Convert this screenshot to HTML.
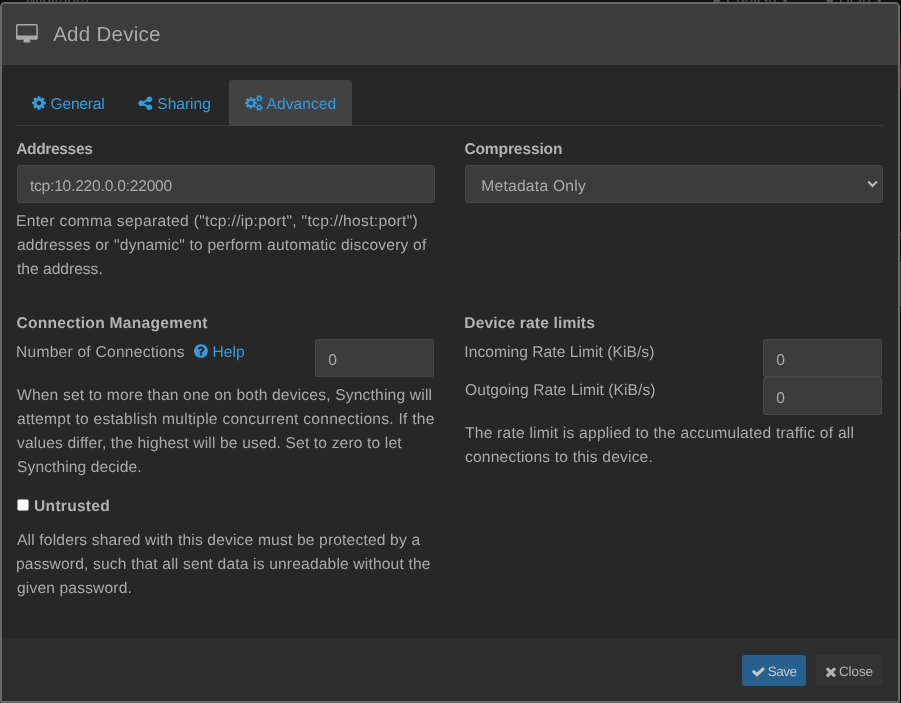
<!DOCTYPE html>
<html lang="en">
<head>
<meta charset="utf-8">
<title>Add Device</title>
<style>
html,body{margin:0;padding:0;}
body{width:901px;height:703px;overflow:hidden;background:#101010;position:relative;
 font-family:"Liberation Sans",sans-serif;color:#aaa;}
.bgtext{position:absolute;color:#555;font-size:15.5px;line-height:24px;white-space:nowrap;}
.modal{position:absolute;left:0;top:2px;width:900px;height:701px;box-sizing:border-box;
 border:2px solid #696969;border-radius:5px 5px 2px 2px;background:#272727;overflow:hidden;}
.abs{position:absolute;}
.inner{position:absolute;left:-2px;top:-4px;width:901px;height:703px;will-change:transform;}
.header{position:absolute;left:2px;top:4px;width:896px;height:60px;background:#3c3c3c;border-bottom:1px solid #424242;box-sizing:content-box;margin:0;}
.footer{position:absolute;left:2px;top:639px;width:896px;height:62px;background:#2d2d2d;}
.t{position:absolute;white-space:nowrap;line-height:24px;text-rendering:geometricPrecision;margin:0;padding:0;font-weight:400;display:block;}
.ic{position:absolute;display:block;overflow:visible;}
.blue{color:#3a9bdc;}
.lab{color:#b2b2b2;}
.tabs{list-style:none;margin:0;padding:0;}
.tabline{position:absolute;left:17px;top:125px;width:866px;height:1px;background:#3a3a3a;}
.tabact{position:absolute;left:229px;top:80px;width:123px;height:46px;background:#424242;border-radius:2.5px 2.5px 0 0;}
.ctl{position:absolute;box-sizing:border-box;background:#3c3c3c;border:1px solid #474747;border-radius:2px;}
.btn{position:absolute;box-sizing:border-box;border-radius:3px;}
.cb{position:absolute;left:17px;top:498.6px;width:12.4px;height:12.2px;box-sizing:border-box;background:#fff;border:1px solid #999;border-radius:2px;}
p,h4,ul,li,label{margin:0;padding:0;}
</style>
</head>
<body>
<span class="bgtext" style="left:26px;top:-13px;">Minimum</span>
<span class="bgtext" style="left:712px;top:-13px;">&#9679; English &#9662;</span>
<span class="bgtext" style="left:825px;top:-13px;">&#9679; Help &#9662;</span>
<div class="abs" style="left:900px;top:0;width:1px;height:703px;background:#0e0e0e"></div>
<div class="abs" style="left:900px;top:33px;width:1px;height:56px;background:#4a1616"></div>
<div class="abs" style="left:900px;top:232px;width:1px;height:4px;background:#5a1414"></div>
<div class="abs" style="left:900px;top:262px;width:1px;height:44px;background:#17452d"></div>
<div class="modal" role="dialog"><div class="inner">
<div class="header"></div>
<svg class="ic" style="left:16.2px;top:23.8px" width="21.8" height="20" viewBox="-64 0 1920 1792" preserveAspectRatio="none" aria-hidden="true"><path fill="#aaa" d="M1728 992v-832q0-13-9.500-22.500t-22.500-9.500h-1600q-13 0-22.500 9.500t-9.500 22.500v832q0 13 9.500 22.500t22.500 9.500h1600q13 0 22.500-9.500t9.500-22.500zM1856 160v1088q0 66-47 113t-113 47h-544q0 37 16 77.500t32 71 16 43.500q0 26-19 45t-45 19h-512q-26 0-45-19t-19-45q0-14 16-44t32-70 16-78h-544q-66 0-113-47t-47-113v-1088q0-66 47-113t113-47h1600q66 0 113 47t47 113z"/></svg>
<h4 class="t" style="left:53.2px;top:23px;font-size:20.5px;letter-spacing:0.262px;">Add Device</h4>
<div class="tabline"></div><div class="tabact"></div>
<ul class="tabs">
<li><svg class="ic" style="left:32.3px;top:95.1px" width="13.9" height="16" viewBox="0 0 1536 1792" preserveAspectRatio="none" aria-hidden="true"><path fill="#3a9bdc" d="M1024 896q0-106-75-181t-181-75-181 75-75 181 75 181 181 75 181-75 75-181zM1536 787v222q0 12-8 23t-20 13l-185 28q-19 54-39 91 35 50 107 138 10 12 10 25t-9 23q-27 37-99 108t-94 71q-12 0-26-9l-138-108q-44 23-91 38-16 136-29 186-7 28-36 28h-222q-14 0-24.500-8.500t-11.500-21.500l-28-184q-49-16-90-37l-141 107q-10 9-25 9-14 0-25-11-126-114-165-168-7-10-7-23 0-12 8-23 15-21 51-66.500t54-70.500q-27-50-41-99l-183-27q-13-2-21-12.500t-8-23.500v-222q0-12 8-23t19-13l186-28q14-46 39-92-40-57-107-138-10-12-10-24 0-10 9-23 26-36 98.500-107.500t94.500-71.500q13 0 26 10l138 107q44-23 91-38 16-136 29-186 7-28 36-28h222q14 0 24.500 8.500t11.500 21.500l28 184q49 16 90 37l142-107q9-9 24-9 13 0 25 10 129 119 165 170 7 8 7 22 0 12-8 23-15 21-51 66.500t-54 70.500q26 50 41 98l183 28q13 2 21 12.500t8 23.500z"/></svg><a class="t blue" style="left:50.6px;top:93px;font-size:15.6px;letter-spacing:-0.237px;">General</a></li>
<li><svg class="ic" style="left:138.4px;top:94.8px" width="14.3" height="16" viewBox="0 0 1568 1792" preserveAspectRatio="none" aria-hidden="true"><path fill="#3a9bdc" d="M1248 1056q133 0 226.500 93.500t93.500 226.500-93.500 226.500-226.500 93.500-226.500-93.500-93.500-226.500q0-12 2-34l-360-180q-92 86-218 86-133 0-226.500-93.500t-93.500-226.500 93.500-226.500 226.500-93.500q126 0 218 86l360-180q-2-22-2-34 0-133 93.500-226.500t226.500-93.500 226.500 93.500 93.500 226.500-93.500 226.500-226.500 93.500q-126 0-218-86l-360 180q2 22 2 34t-2 34l360 180q92-86 218-86z"/></svg><a class="t blue" style="left:157.3px;top:93px;font-size:15.6px;letter-spacing:-0.03px;">Sharing</a></li>
<li><svg class="ic" style="left:244.5px;top:95.3px" width="17.8" height="16" viewBox="0 0 1920 1792" preserveAspectRatio="none" aria-hidden="true"><path fill="#3a9bdc" d="M896 896q0-106-75-181t-181-75-181 75-75 181 75 181 181 75 181-75 75-181zM1664 1408q0-52-38-90t-90-38-90 38-38 90q0 53 37.500 90.500t90.500 37.500 90.500-37.500 37.500-90.500zM1664 384q0-52-38-90t-90-38-90 38-38 90q0 53 37.500 90.500t90.500 37.500 90.500-37.500 37.500-90.500zM1280 805v185q0 10-7 19.500t-16 10.500l-155 24q-11 35-32 76 34 48 90 115 7 11 7 20 0 12-7 19-23 30-82.500 89.500t-78.500 59.500q-11 0-21-7l-115-90q-37 19-77 31-11 108-23 155-7 24-30 24h-186q-11 0-20-7.500t-10-17.500l-23-153q-34-10-75-31l-118 89q-7 7-20 7-11 0-21-8-144-133-144-160 0-9 7-19 10-14 41-53t47-61q-23-44-35-82l-152-24q-10-1-17-9.500t-7-19.500v-185q0-10 7-19.500t16-10.500l155-24q11-35 32-76-34-48-90-115-7-11-7-20 0-12 7-20 22-30 82-89t79-59q11 0 21 7l115 90q34-18 77-32 11-108 23-154 7-24 30-24h186q11 0 20 7.500t10 17.500l23 153q34 10 75 31l118-89q8-7 20-7 11 0 21 8 144 133 144 160 0 8-7 19-12 16-42 54t-45 60q23 48 34 82l152 23q10 2 17 10.500t7 19.500zM1920 1338v140q0 16-149 31-12 27-30 52 51 113 51 138 0 4-4 7-122 71-124 71-8 0-46-47t-52-68q-20 2-30 2t-30-2q-14 21-52 68t-46 47q-2 0-124-71-4-3-4-7 0-25 51-138-18-25-30-52-149-15-149-31v-140q0-16 149-31 13-29 30-52-51-113-51-138 0-4 4-7 4-2 35-20t59-34 30-16q8 0 46 46.500t52 67.500q20-2 30-2t30 2q51-71 92-112l6-2q4 0 124 70 4 3 4 7 0 25-51 138 17 23 30 52 149 15 149 31zM1920 314v140q0 16-149 31-12 27-30 52 51 113 51 138 0 4-4 7-122 71-124 71-8 0-46-47t-52-68q-20 2-30 2t-30-2q-14 21-52 68t-46 47q-2 0-124-71-4-3-4-7 0-25 51-138-18-25-30-52-149-15-149-31v-140q0-16 149-31 13-29 30-52-51-113-51-138 0-4 4-7 4-2 35-20t59-34 30-16q8 0 46 46.500t52 67.500q20-2 30-2t30 2q51-71 92-112l6-2q4 0 124 70 4 3 4 7 0 25-51 138 17 23 30 52 149 15 149 31z"/></svg><a class="t blue" style="left:266.5px;top:93px;font-size:15.6px;letter-spacing:0.045px;">Advanced</a></li>
</ul>
<label class="t lab" style="left:16.2px;top:138px;font-size:15.6px;letter-spacing:-0.385px;font-weight:700;">Addresses</label>
<div class="ctl" style="left:17px;top:165px;width:418px;height:38px"></div><span class="t" style="left:29.9px;top:175px;font-size:15.6px;letter-spacing:-0.22px;">tcp:10.220.0.0:22000</span>
<p><span class="t" style="left:16px;top:210px;font-size:15.6px;letter-spacing:0.318px;">Enter comma separated (&quot;tcp://ip:port&quot;, &quot;tcp://host:port&quot;)</span><span class="t" style="left:17px;top:234px;font-size:15.6px;letter-spacing:0.197px;">addresses or &quot;dynamic&quot; to perform automatic discovery of</span><span class="t" style="left:17px;top:258px;font-size:15.6px;letter-spacing:-0.009px;">the address.</span></p>
<label class="t lab" style="left:16.4px;top:312px;font-size:15.6px;letter-spacing:0.279px;font-weight:700;">Connection Management</label>
<span class="t" style="left:16px;top:341px;font-size:15.6px;letter-spacing:0.238px;">Number of Connections</span><svg class="ic" style="left:194.2px;top:342.8px" width="13.9" height="16" viewBox="0 0 1536 1792" preserveAspectRatio="none" aria-hidden="true"><path fill="#3a9bdc" d="M896 1376v-192q0-14-9-23t-23-9h-192q-14 0-23 9t-9 23v192q0 14 9 23t23 9h192q14 0 23-9t9-23zM1152 704q0-88-55.500-163t-138.500-116-170-41q-243 0-371 213-15 24 8 42l132 100q7 6 19 6 16 0 25-12 53-68 86-92 34-24 86-24 48 0 85.500 26t37.500 59q0 38-20 61t-68 45q-63 28-115.500 86.500t-52.500 125.500v36q0 14 9 23t23 9h192q14 0 23-9t9-23q0-19 21.500-49.500t54.500-49.500q32-18 49-28.500t46-35 44.500-48 28-60.500 12.500-81zM1536 896q0 209-103 385.500t-279.500 279.500-385.500 103-385.500-103-279.500-279.500-103-385.500 103-385.500 279.500-279.500 385.500-103 385.500 103 279.500 279.500 103 385.500z"/></svg><a class="t blue" style="left:212.4px;top:341px;font-size:15.6px;letter-spacing:0.065px;">Help</a>
<div class="ctl" style="left:315px;top:339px;width:119px;height:38px"></div><span class="t" style="left:328.3px;top:349px;font-size:15.6px;letter-spacing:0px;">0</span>
<p><span class="t" style="left:17px;top:384px;font-size:15.6px;letter-spacing:0.183px;">When set to more than one on both devices, Syncthing will</span><span class="t" style="left:17px;top:408px;font-size:15.6px;letter-spacing:0.259px;">attempt to establish multiple concurrent connections. If the</span><span class="t" style="left:17px;top:432px;font-size:15.6px;letter-spacing:0.15px;">values differ, the highest will be used. Set to zero to let</span><span class="t" style="left:17px;top:456px;font-size:15.6px;letter-spacing:0.089px;">Syncthing decide.</span></p>
<div class="cb"></div><label class="t lab" style="left:34.1px;top:495px;font-size:15.6px;letter-spacing:0.248px;font-weight:700;">Untrusted</label>
<p><span class="t" style="left:17px;top:529px;font-size:15.6px;letter-spacing:0.168px;">All folders shared with this device must be protected by a</span><span class="t" style="left:16px;top:553px;font-size:15.6px;letter-spacing:0.166px;">password, such that all sent data is unreadable without the</span><span class="t" style="left:17px;top:577px;font-size:15.6px;letter-spacing:0.153px;">given password.</span></p>
<label class="t lab" style="left:464.4px;top:138px;font-size:15.6px;letter-spacing:-0.153px;font-weight:700;">Compression</label>
<div class="ctl" style="left:465px;top:165px;width:418px;height:38px"></div><span class="t" style="left:481.2px;top:175px;font-size:15.6px;letter-spacing:0.265px;">Metadata Only</span>
<svg class="ic" style="left:866.9px;top:179.9px" width="11" height="8" viewBox="0 0 11 8"><path d="M1.2 1.6 L5.5 5.9 L9.8 1.6" fill="none" stroke="#bcbcbc" stroke-width="2.1"/></svg>
<label class="t lab" style="left:464.3px;top:312px;font-size:15.6px;letter-spacing:0.134px;font-weight:700;">Device rate limits</label>
<span class="t" style="left:464.3px;top:341px;font-size:15.6px;letter-spacing:0.045px;">Incoming Rate Limit (KiB/s)</span><div class="ctl" style="left:763px;top:339px;width:119px;height:38px"></div><span class="t" style="left:776.3px;top:349px;font-size:15.6px;letter-spacing:0px;">0</span>
<span class="t" style="left:465px;top:379px;font-size:15.6px;letter-spacing:0.06px;">Outgoing Rate Limit (KiB/s)</span><div class="ctl" style="left:763px;top:377px;width:119px;height:38px"></div><span class="t" style="left:776.3px;top:387px;font-size:15.6px;letter-spacing:0px;">0</span>
<p><span class="t" style="left:465px;top:422px;font-size:15.6px;letter-spacing:0.225px;">The rate limit is applied to the accumulated traffic of all</span><span class="t" style="left:465px;top:446px;font-size:15.6px;letter-spacing:0.189px;">connections to this device.</span></p>
<div class="footer"></div>
<div class="btn" style="left:742px;top:655px;width:64px;height:31px;background:#27608e;"></div><svg class="ic" style="left:751.6px;top:666.9px" width="12.9" height="9.4" viewBox="121 294 1550 1228" preserveAspectRatio="none" aria-hidden="true"><path fill="#c4c4c4" d="M1671 566q0 40-28 68l-724 724-136 136q-28 28-68 28t-68-28l-136-136-362-362q-28-28-28-68t28-68l136-136q28-28 68-28t68 28l294 295 656-657q28-28 68-28t68 28l136 136q28 28 28 68z"/></svg><span class="t" style="left:767.8px;top:660px;font-size:13.5px;letter-spacing:-0.558px;color:#c8c8c8;">Save</span>
<div class="btn" style="left:816px;top:655px;width:67px;height:31px;background:#333;"></div><svg class="ic" style="left:825.5px;top:666.7px" width="9.9" height="9.6" viewBox="110 302 1188 1188" preserveAspectRatio="none" aria-hidden="true"><path fill="#b4b4b4" d="M1298 1322q0 40-28 68l-136 136q-28 28-68 28t-68-28l-294-294-294 294q-28 28-68 28t-68-28l-136-136q-28-28-28-68t28-68l294-294-294-294q-28-28-28-68t28-68l136-136q28-28 68-28t68 28l294 294 294-294q28-28 68-28t68 28l136 136q28 28 28 68t-28 68l-294 294 294 294q28 28 28 68z"/></svg><span class="t" style="left:839px;top:660px;font-size:13.5px;letter-spacing:-0.127px;color:#b4b4b4;">Close</span>
</div></div>
</body>
</html>
